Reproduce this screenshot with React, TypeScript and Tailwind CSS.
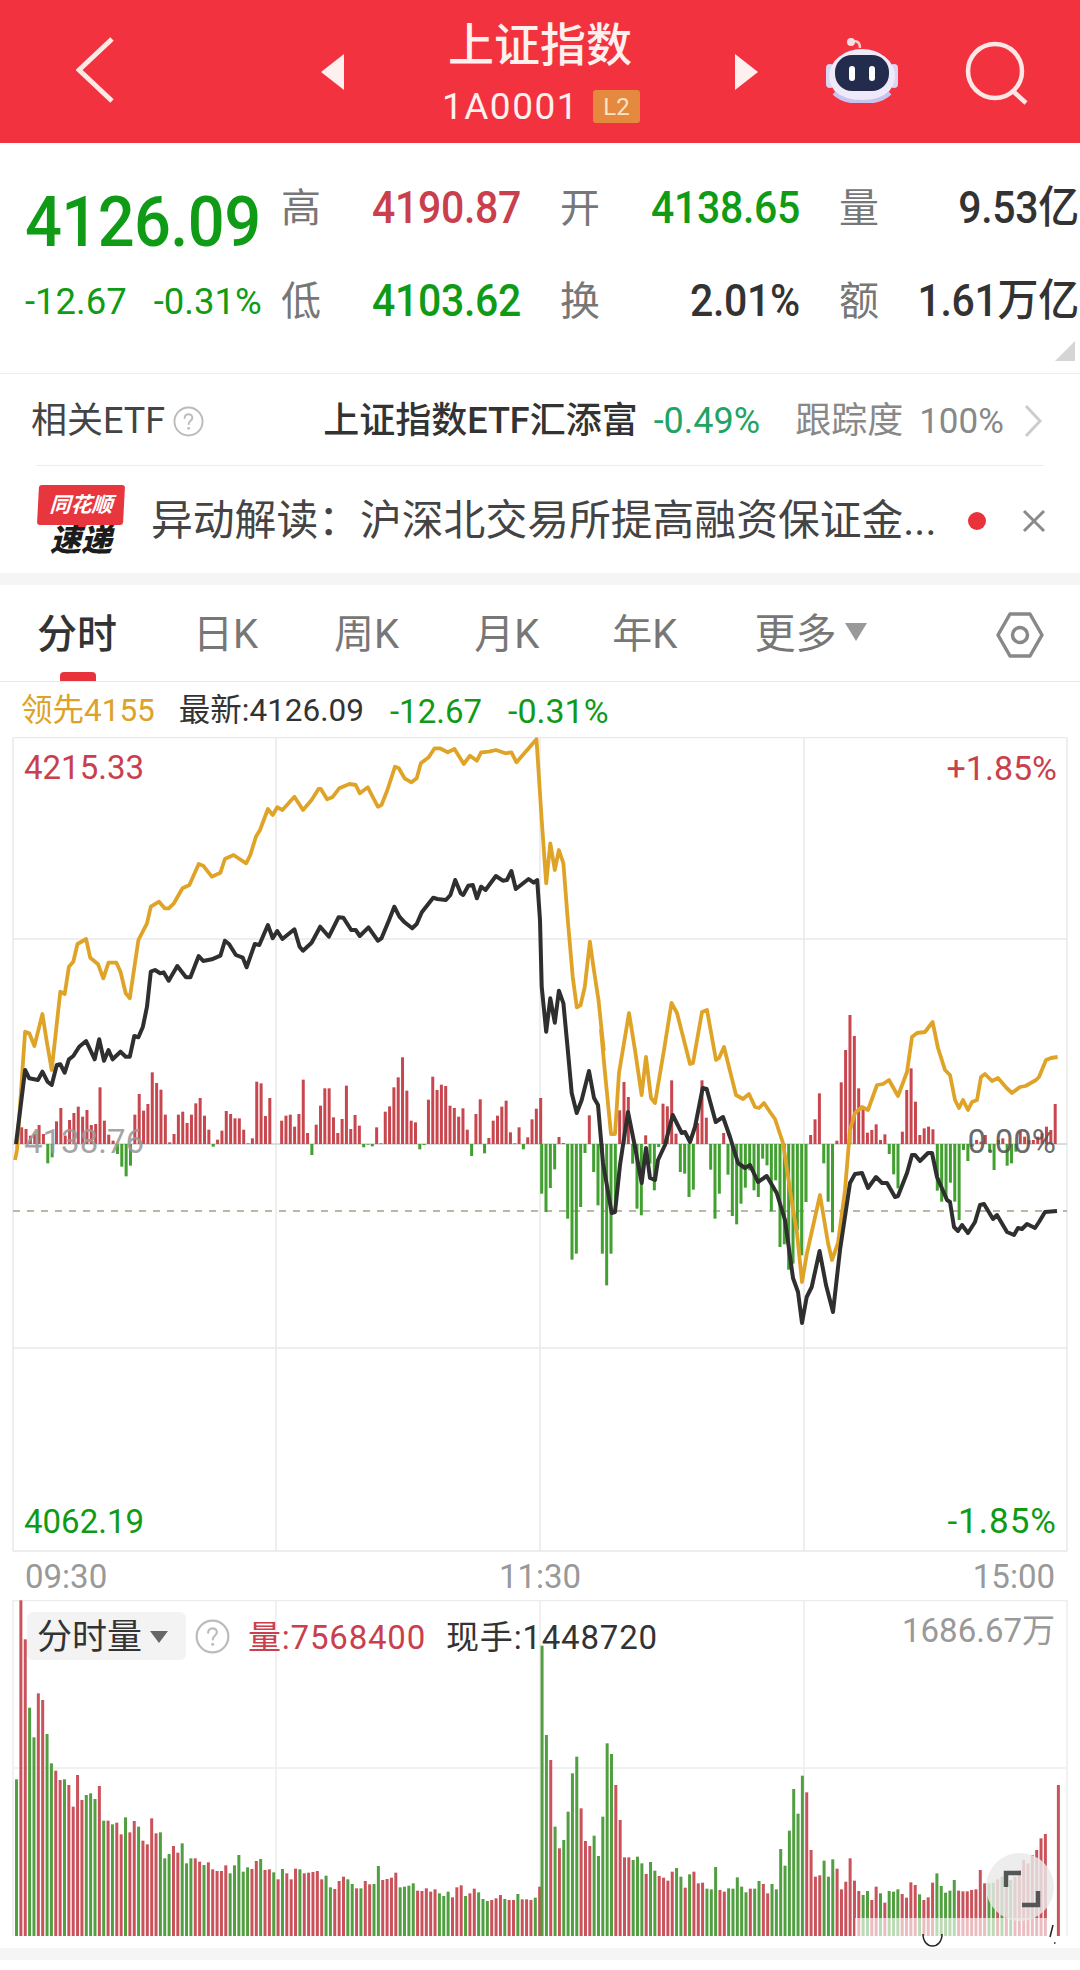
import React from "react";

type P = [number, number];
const z3 = (a: number[]) => {
  const o: P[] = [];
  for (let i = 0; i < a.length; i += 2) o.push([a[i] / 2.904, 720 + a[i + 1] / 3]);
  return o;
};
const z4 = (a: number[]) => {
  const o: P[] = [];
  for (let i = 0; i < a.length; i += 2) o.push([540 + a[i] / 2.904, 720 + a[i + 1] / 3]);
  return o;
};
const raw = (a: number[]) => {
  const o: P[] = [];
  for (let i = 0; i < a.length; i += 2) o.push([a[i], a[i + 1]]);
  return o;
};
const toPts = (p: P[]) => p.map(([x, y]) => `${x.toFixed(1)},${y.toFixed(1)}`).join(" ");

const gold: P[] = [
  ...raw([15, 1160, 17, 1150]),
  ...z3([73, 935, 85, 940, 100, 978, 123, 882, 135, 960, 150, 1050, 175, 815, 188, 822, 200, 740, 213, 725, 225, 672, 250, 657, 262, 713, 285, 733, 300, 775, 315, 728, 338, 728, 350, 755, 365, 820, 377, 835, 402, 660, 427, 610, 438, 560, 462, 545, 478, 565, 490, 565, 505, 550, 530, 505, 550, 495, 577, 432, 590, 437, 615, 470, 640, 458, 653, 417, 678, 405, 715, 430, 727, 405, 743, 350, 755, 330, 778, 267, 792, 285, 805, 262, 820, 270, 855, 230, 880, 270, 905, 240, 925, 207, 932, 207, 950, 238, 965, 232, 985, 205, 1015, 192, 1033, 195, 1045, 220, 1068, 202, 1097, 260, 1108, 255, 1125, 210, 1147, 140, 1158, 145, 1175, 175, 1195, 187, 1210, 175, 1222, 130, 1245, 112, 1262, 85, 1277, 85, 1300, 97, 1320, 87, 1347, 132, 1365, 107, 1385, 122, 1397, 97, 1420, 95, 1440, 90, 1468, 100, 1485, 97, 1500, 127, 1558, 58]),
  ...z4([5, 300, 18, 490, 30, 370, 43, 450, 55, 390, 68, 430, 80, 590, 95, 770, 107, 862, 118, 855, 130, 800, 145, 665, 155, 740, 170, 840, 185, 990]),
  ...raw([601, 1030, 605, 1073, 611, 1134, 615, 1134, 619, 1073, 629, 1013, 635, 1050, 641.6, 1095, 646, 1057, 651, 1098, 655, 1103, 664, 1050, 671.5, 1003, 677, 1013, 690, 1064, 693, 1063, 702, 1012, 707, 1010, 716, 1060, 719, 1058, 724, 1047, 736, 1095, 743, 1099, 749, 1094, 755, 1107, 759, 1108, 764, 1103, 770, 1112, 775, 1119, 783, 1143, 792, 1203, 797, 1233, 802, 1282, 807, 1253, 820, 1195, 828, 1243, 832, 1260, 838, 1243, 845, 1190, 850, 1130, 855, 1113, 862, 1107, 868, 1110, 877, 1085, 883, 1084, 889, 1080, 898, 1096, 907, 1072, 912, 1037, 917, 1033, 925, 1032, 932.6, 1022, 938, 1048, 945, 1070, 950, 1075, 955, 1100, 959, 1108, 963, 1100, 968, 1110, 972, 1102, 977, 1100, 981, 1077, 985, 1074, 992, 1081, 998, 1078, 1006.6, 1088, 1012, 1093, 1020, 1087, 1025.5, 1086, 1036, 1080, 1039, 1077, 1046, 1060, 1051, 1058, 1057.6, 1057]),
];

const black: P[] = [
  ...raw([16, 1144]),
  ...z3([73, 1050, 85, 1075, 110, 1080, 123, 1055, 138, 1085, 150, 1095, 165, 1035, 175, 1033, 188, 1058, 200, 1018, 213, 1008, 230, 980, 250, 963, 275, 1018, 288, 958, 302, 1022, 315, 990, 327, 1018, 350, 995, 365, 1010, 377, 1010, 390, 948, 402, 952, 415, 920, 427, 860, 438, 755, 450, 750, 465, 760, 475, 757, 490, 782, 515, 738, 540, 772, 553, 772, 577, 708, 590, 723, 615, 718, 640, 707, 653, 662, 665, 672, 685, 705, 705, 713, 716, 742, 740, 672, 753, 675, 778, 615, 792, 655, 805, 633, 820, 657, 855, 628, 870, 680, 880, 692, 905, 668, 930, 620, 955, 650, 983, 592, 997, 593, 1020, 630, 1033, 630, 1045, 648, 1070, 622, 1097, 662, 1108, 655, 1130, 600, 1145, 560, 1160, 590, 1175, 607, 1197, 625, 1210, 612, 1225, 577, 1258, 533, 1270, 537, 1295, 540, 1308, 525, 1322, 480, 1338, 520, 1345, 525, 1360, 497, 1373, 495, 1385, 535, 1397, 500, 1410, 510, 1440, 468, 1460, 482, 1472, 480, 1485, 453, 1498, 507, 1535, 477, 1550, 488, 1560, 480]),
  ...z4([0, 600, 5, 800, 18, 935, 30, 835, 43, 908, 55, 812, 68, 850, 80, 980]),
  ...raw([571.7, 1093, 576.7, 1113, 581.7, 1100, 589, 1071, 594, 1098, 598, 1105, 603, 1163, 611.7, 1213, 615, 1212, 620, 1165, 628, 1112, 635, 1147, 641.7, 1183, 646, 1148, 650, 1178, 655, 1180, 658, 1160, 665, 1145, 672.7, 1115, 681.7, 1133, 685, 1132, 690, 1142, 695, 1127, 702.7, 1088, 706.7, 1089, 715.7, 1122, 723, 1117, 730, 1137, 738, 1163, 745, 1168, 750, 1165, 758, 1182, 766.7, 1176, 776.7, 1193, 785, 1220, 793, 1278, 798, 1292, 802, 1323, 806.7, 1297, 811.7, 1287, 819.6, 1251, 826, 1285, 833, 1312, 840, 1250, 850, 1183, 855, 1174, 862, 1173, 868, 1188, 876, 1177, 882, 1183, 887, 1183, 895, 1197, 898, 1196, 907, 1173, 912, 1155, 915, 1155, 920, 1161, 928, 1153, 932, 1153, 937, 1177, 947, 1200, 950, 1202, 954, 1227, 958, 1231, 962, 1225, 968, 1233, 975, 1222, 980, 1205, 984, 1204, 993, 1219, 997, 1215, 1007, 1232, 1014, 1235, 1018, 1228, 1022, 1229, 1027, 1224, 1035, 1228, 1039, 1222, 1045, 1212, 1057, 1211]),
];

const z10 = [260, 265, 285, 280, 253, 280, 368, 350, 242, 202, 285, 238, 217, 198, 228, 208, 253, 250, 140, 240, 282, 300, 340, 378, 407, 375, 222, 160, 210, 190, 95, 127, 147, 222, 305, 280, 222, 213, 247, 222, 188, 172, 225, 267, 318, 297, 270, 211, 220, 233, 233, 267, 308, 293, 123, 128, 226, 172];
const z11 = [240, 225, 222, 258, 220, 117, 277, 343, 252, 195, 143, 143, 230, 277, 235, 135, 265, 223, 255, 320, 312, 317, 260, 308, 213, 197, 140, 110, 50, 150, 240, 245, 326, 313, 177, 108, 148, 132, 136, 195, 202, 228, 203, 267, 346, 220, 176, 338, 292, 240, 225, 198, 180, 275, 308, 260, 326, 290, 236, 204, 172];
const z8 = [490, 545, 473, 417, 320, 338, 565, 688, 670, 530, 368, 255, 425, 525, 670, 765, 670, 520, 240, 155, 200, 400, 535, 555, 315, 400, 480, 350, 220, 228, 150, 310, 425, 430, 500, 478, 278, 150, 262, 418, 565, 490, 308, 433, 557, 582, 520, 472, 420, 480, 500, 385, 405, 543, 450, 650, 642, 718, 700, 600, 675, 515];
const z9 = [315, 268, 190, 400, 515, 607, 332, 157, 60, -45, 18, 175, 238, 308, 300, 283, 330, 313, 372, 433, 475, 305, 180, 115, 215, 315, 295, 290, 298, 482, 515, 503, 458, 515, 570, 360, 393, 350, 330, 335, 315, 365, 420, 330, 325, 407, 400, 365, 305, 320, 330, 330, 320, 310, 290, 300, 222];

type Bar = { x: number; y: number; h: number; c: string };
const mainBars: Bar[] = [];
const addMain = (vals: number[], f: (i: number) => number, zero: number) => {
  vals.forEach((v, i) => {
    const d = (v - zero) / 3;
    mainBars.push(d < 0 ? { x: f(i), y: 1144 + d, h: -d, c: "#c8474f" } : { x: f(i), y: 1144, h: d, c: "#41a030" });
  });
};
addMain(z10, (i) => (65 + 13.06 * i) / 3, 310);
addMain(z11, (i) => 270 + (35 + 12.95 * i) / 3, 310);
addMain(z8, (i) => 530 + (35 + 13 * i) / 3, 341);
addMain(z9, (i) => 800 + (32 + 13.1 * i) / 3, 342);

const v5 = [-538, 1, 118, -323, -412, 280, 300, -402, -490, 512, 540, -538, 555, 620, 525, 600, -585, -580, -597, 558, -662, 662, -673, 668, 703, -652, 697, 663, -680, 722, 733, 655, 700, -697, -775, -762, 738, 758, -730, -790, -775, 775, 785, -795, 787, 808, 813, 813, 796, -820, -796, -765, -815, -802, 807, 783, -777, 810, 808, -817, 838, -807, 820, 838, 806, -808, 820, 818, 816, 813, 838, -827, -862, 867, 843, 830, -838, -852, 865, -865, 843, 853, -852, -798, 840, 837, 833, 818, -862, -860, -857, -850, 872, 873, 865, 875, 868, -880, -888, -875, 892, 862, 856, -888, 880, 866, -877, -897, -903, 900, 895, 885, -897, 900, 900, -882, 898, 898, 900, -893, 860];
const v6 = [-137, -405, 480, -680, 745, -720, -635, -520, -470, 625, 723, 738, -707, -768, -650, -430, -462, 555, 660, 772, 772, -780, -770, -790, 822, -786, -812, 828, 833, 842, 815, -804, -830, 863, -823, 815, 850, 848, -866, -868, -801, 870, 875, -865, -866, -832, -860, -877, 866, -866, -843, 852, 880, -852, -868, -747, -797, -692, -567, -641, -527, 577, 750, 830, 826, -782, -830, -778, 806, 868, 845, 775, 842, 873, -885, -873, 900, 860, -880, 908, -873, -875, -868, 882, 893, 847, 855, -883, 900, 892, 848, -820, -858, -878, -872, -840, 872, 874, 874, 870, 868, 810, 850, -850, -848, 838, -830, 835, -840, 830, 810, 780, 790, 765, 750, 715, 702, 0, 0, 555];

const volBars: Bar[] = [];
const addVol = (vals: number[], f: (i: number) => number) => {
  vals.forEach((v, i) => {
    if (v === 0) return;
    const top = 1600 + Math.abs(v) / 3;
    volBars.push({ x: f(i), y: top, h: 1936 - top, c: v > 0 ? "#ca525b" : "#519f40" });
  });
};
addVol(v5, (i) => (48 + 12.66 * i) / 2.904);
addVol(v6, (i) => 540 + (6 + 12.6 * i) / 2.904);

const num = "font-[Roboto,'Noto_Sans_CJK_SC',sans-serif]";

function StatCell({ label, value, color }: { label: string; value: React.ReactNode; color: string }) {
  return (
    <div className="flex items-center justify-between">
      <span className="text-[40px] leading-none text-[#777]">{label}</span>
      <span className={`inline-block scale-y-[1.07] whitespace-nowrap text-[41px] font-medium leading-none tracking-[-0.300px] ${color}`}>{value}</span>
    </div>
  );
}

function Help({ size }: { size: number }) {
  return (
    <svg width={size} height={size} viewBox="0 0 32 32" fill="none" className="shrink-0">
      <circle cx="16" cy="16" r="14.5" stroke="#bbb" strokeWidth="2" />
      <path d="M12 12.5c0-2.4 1.8-4 4-4s4 1.500 4 3.600c0 3-3.800 3.400-3.800 6.600" stroke="#bbb" strokeWidth="2" strokeLinecap="round" />
      <circle cx="16.200" cy="23" r="1.400" fill="#bbb" />
    </svg>
  );
}

export default function App() {
  return (
    <div className={`relative h-[1970px] w-[1080px] overflow-hidden bg-white ${num}`}>
      {/* Header */}
      <header className="flex h-[143px] items-center bg-[#f2323e] text-[#fdf0ee]">
        <svg width="38" height="66" viewBox="0 0 38 66" fill="none" className="ml-[76px] mt-[-4px]">
          <path d="M36 2 L3 33 L36 64" stroke="#fde9e6" strokeWidth="5" />
        </svg>
        <svg width="23" height="36" viewBox="0 0 23 36" className="ml-[207px]"><path d="M23 0V36L0 18Z" fill="#fdf0ee" /></svg>
        <div className="ml-[46px] flex w-[300px] flex-col items-center">
          <div className="text-[46px] font-medium leading-[56px]">上证指数</div>
          <div className="mt-[14px] flex items-center gap-[14px] pl-[2px]">
            <span className="text-[37px] leading-[40px] tracking-[1.500px]">1A0001</span>
            <span className="flex h-[33px] w-[47px] items-center justify-center rounded-[3px] bg-[#e5893f] text-[24px] leading-none text-[#fbe3c8]">L2</span>
          </div>
        </div>
        <svg width="23" height="36" viewBox="0 0 23 36" className="ml-[45px]"><path d="M0 0V36L23 18Z" fill="#fdf0ee" /></svg>
        <svg width="72" height="68" viewBox="0 0 72 68" fill="none" className="ml-[68px] mt-[-6px]">
          <path d="M26 8c3-3 8-2 8 5" stroke="#f5c9cf" strokeWidth="2.500" />
          <circle cx="25" cy="7" r="4" fill="#f3dfe4" />
          <rect x="0" y="29" width="8" height="24" rx="4" fill="#d9d6f5" />
          <rect x="64" y="29" width="8" height="24" rx="4" fill="#d9d6f5" />
          <ellipse cx="36" cy="41" rx="33" ry="27" fill="#eeeaf9" />
          <path d="M8 58c12 12 44 12 56 0" stroke="#c9c3f0" strokeWidth="4" fill="none" />
          <rect x="9" y="20" width="54" height="36" rx="17" fill="#232c4c" />
          <rect x="23" y="31" width="6" height="15" rx="3" fill="#fff" />
          <rect x="43" y="31" width="6" height="15" rx="3" fill="#fff" />
        </svg>
        <svg width="70" height="70" viewBox="0 0 70 70" fill="none" className="ml-[60px] mt-[-2px]">
          <circle cx="37" cy="35" r="27" stroke="#fde6e6" strokeWidth="4.500" />
          <path d="M56 56 L68 67" stroke="#fde6e6" strokeWidth="4.500" />
        </svg>
      </header>

      {/* Quote stats */}
      <section className="relative h-[231px] border-b border-[#ececec]">
        <div className="grid grid-cols-[217px_240px_240px_240px] gap-x-[39px] pl-[25px] pt-[45px]">
          <div className="h-[40px] whitespace-nowrap">
            <span className="mt-[-2px] inline-block origin-top scale-y-[1.08] text-[65px] font-medium leading-[68px] tracking-[-0.600px] text-[#0f9b16]">4126.09</span>
          </div>
          <StatCell label="高" value="4190.87" color="text-[#c9404c]" />
          <StatCell label="开" value="4138.65" color="text-[#0f9b16]" />
          <StatCell label="量" value="9.53亿" color="text-[#333]" />
        </div>
        <div className="mt-[52px] grid grid-cols-[217px_240px_240px_240px] gap-x-[39px] pl-[25px]">
          <div className="flex items-center gap-[27px] whitespace-nowrap text-[36.500px] leading-[40px] text-[#0f9b16]">
            <span>-12.67</span>
            <span>-0.31%</span>
          </div>
          <StatCell label="低" value="4103.62" color="text-[#0f9b16]" />
          <StatCell label="换" value="2.01%" color="text-[#333]" />
          <StatCell label="额" value="1.61万亿" color="text-[#333]" />
        </div>
        <div className="absolute bottom-[12px] right-[5px] h-0 w-0 border-b-[20px] border-l-[20px] border-b-[#d5d5d5] border-l-transparent" />
      </section>

      {/* ETF */}
      <section className="mx-[36px] flex h-[92px] items-center whitespace-nowrap border-b border-[#ececec] pt-[3px] leading-none">
        <span className="ml-[-5px] text-[36px] text-[#444]">相关ETF</span>
        <span className="ml-[8px]"><Help size={31} /></span>
        <span className="ml-[119px] text-[36px] font-medium text-[#333]">上证指数ETF汇添富</span>
        <span className="ml-[16px] text-[36px] text-[#1fa463]">-0.49%</span>
        <span className="ml-[35px] text-[36px] text-[#888]">跟踪度</span>
        <span className="ml-[16px] text-[35px] text-[#888]">100%</span>
        <svg width="18" height="32" viewBox="0 0 18 32" fill="none" className="ml-[20px] shrink-0"><path d="M2 1 L16 16 L2 31" stroke="#ccc" strokeWidth="3" /></svg>
      </section>

      {/* News */}
      <section className="flex h-[107px] items-center pt-[3px]">
        <div className="relative ml-[37px] flex w-[88px] shrink-0 flex-col items-center">
          <div className="flex h-[40px] w-[86px] -skew-x-3 items-center justify-center rounded-[3px] bg-[#e8363f] text-[21px] font-bold italic leading-none text-white">同花顺</div>
          <div className="h-0 w-0 border-l-[6px] border-r-[6px] border-t-[7px] border-l-transparent border-r-transparent border-t-[#e8363f]" />
          <div className="mt-[-7px] text-[31px] font-black italic leading-[32px] text-[#1c1c1c]">速递</div>
        </div>
        <span className="ml-[26px] w-[788px] whitespace-nowrap text-[41.800px] leading-none text-[#444]">异动解读：沪深北交易所提高融资保证金...</span>
        <span className="ml-[29px] h-[18px] w-[18px] shrink-0 rounded-full bg-[#e8333c]" />
        <svg width="24" height="24" viewBox="0 0 24 24" fill="none" className="ml-[36px] shrink-0"><path d="M2 2 L22 22 M22 2 L2 22" stroke="#8a8a8a" strokeWidth="3" /></svg>
      </section>
      <div className="h-[12px] bg-[#f5f5f5]" />

      {/* Tabs */}
      <nav className="relative flex h-[97px] items-center border-b border-[#e8e8e8] pt-[3px] text-[40px] leading-none text-[#777]">
        <span className="ml-[37px] font-medium text-[#333]">分时</span>
        <span className="ml-[76px]">日K</span>
        <span className="ml-[76px]">周K</span>
        <span className="ml-[75px]">月K</span>
        <span className="ml-[73px]">年K</span>
        <span className="ml-[77px] text-[41px]">更多</span>
        <svg width="22" height="18" viewBox="0 0 22 18" className="ml-[9px] mt-[-6px] shrink-0"><path d="M0 0H22L11 18Z" fill="#999" /></svg>
        <svg width="48" height="48" viewBox="0 0 48 48" fill="none" className="ml-[129px] shrink-0">
          <path d="M14 3H34L46 24L34 45H14L2 24Z" stroke="#888" strokeWidth="3.500" strokeLinejoin="round" />
          <circle cx="24" cy="24" r="7.500" stroke="#888" strokeWidth="3.500" />
        </svg>
        <span className="absolute bottom-0 left-[60px] h-[9px] w-[36px] rounded-t-[4px] bg-[#e8333c]" />
      </nav>

      {/* Legend */}
      <div className="flex h-[55px] items-center whitespace-nowrap pl-[21px] pt-[3px] text-[31.500px] leading-none">
        <span className="text-[#dca22a]">领先4155</span>
        <span className="ml-[24px] text-[#333]">最新:4126.09</span>
        <span className="ml-[26px] text-[33px] text-[#0f9b16]">-12.67</span>
        <span className="ml-[26px] text-[34px] text-[#0f9b16]">-0.31%</span>
      </div>

      {/* Main chart */}
      <section className="relative h-[815px]">
        <svg width="1080" height="815" viewBox="0 737 1080 815" className="block">
          <g stroke="#e9e9e9" strokeWidth="1.500">
            {[13, 276, 540, 804, 1067].map((x) => <line key={x} x1={x} x2={x} y1="737" y2="1551" />)}
            {[737.5, 939, 1348, 1551].map((y) => <line key={y} x1="13" x2="1067" y1={y} y2={y} />)}
          </g>
          <line x1="13" x2="1067" y1="1144" y2="1144" stroke="#cfcfcf" strokeWidth="1.500" />
          <line x1="13" x2="1067" y1="1211" y2="1211" stroke="#a89f85" strokeWidth="1.500" strokeDasharray="7 7" />
          {mainBars.map((b, i) => <rect key={i} x={b.x - 1.5} y={b.y} width="3" height={b.h} fill={b.c} />)}
          <polyline points={toPts(gold)} fill="none" stroke="#dfa427" strokeWidth="3.800" strokeLinejoin="round" />
          <polyline points={toPts(black)} fill="none" stroke="#2f2f2f" strokeWidth="4" strokeLinejoin="round" />
        </svg>
        <span className="absolute left-[24px] top-[14px] text-[33px] leading-[34px] text-[#c9404c]">4215.33</span>
        <span className="absolute right-[23px] top-[14px] text-[34px] leading-[34px] text-[#c9404c]">+1.85%</span>
        <span className="absolute left-[24px] top-[388px] text-[33px] leading-[34px] text-[#999]/90">4138.76</span>
        <span className="absolute right-[24px] top-[388px] text-[33px] leading-[34px] text-[#555]/90">0.00%</span>
        <span className="absolute bottom-[13px] left-[24px] text-[33px] leading-[34px] text-[#0f9b16]">4062.19</span>
        <span className="absolute bottom-[13px] right-[23px] text-[35px] leading-[34px] tracking-[1px] text-[#0f9b16]">-1.85%</span>
      </section>

      {/* Time axis */}
      <div className="flex h-[48px] items-center justify-between px-[25px] text-[33px] leading-none text-[#999]">
        <span>09:30</span>
        <span>11:30</span>
        <span>15:00</span>
      </div>

      {/* Volume */}
      <section className="relative h-[348px]">
        <svg width="1080" height="348" viewBox="0 1600 1080 348" className="block">
          <g stroke="#ececec" strokeWidth="1.500">
            {[13, 276, 540, 804, 1067].map((x) => <line key={x} x1={x} x2={x} y1="1600" y2="1936" />)}
            {[1600.5, 1768].map((y) => <line key={y} x1="13" x2="1067" y1={y} y2={y} />)}
          </g>
          {volBars.map((b, i) => <rect key={i} x={b.x - 1.5} y={b.y} width="3" height={b.h} fill={b.c} />)}
          <rect x="855" y="1918" width="200" height="24" fill="#fff" fillOpacity="0.62" />
          <circle cx="1020" cy="1887" r="34" fill="#e9e9e9" fillOpacity="0.82" />
          <path d="M1006 1887V1873H1021" stroke="#555" strokeWidth="4.500" fill="none" />
          <path d="M1038 1891V1905H1022" stroke="#555" strokeWidth="4.500" fill="none" />
          <path d="M923 1934c0 16 19 16 19 0" stroke="#222" strokeWidth="1.500" fill="none" />
          <path d="M1053 1925L1050 1937M1054 1943h1.500" stroke="#222" strokeWidth="1.500" fill="none" />
        </svg>
        <div className="absolute left-[27px] top-[12px] flex h-[48px] w-[159px] items-center rounded-[6px] bg-[#f2f2f2]/90 pl-[10px] pt-[2px] text-[35px] leading-none text-[#333]">
          <span>分时量</span>
          <svg width="18" height="12" viewBox="0 0 18 12" className="ml-[8px]"><path d="M0 0H18L9 12Z" fill="#666" /></svg>
        </div>
        <div className="absolute left-[195px] top-[19px]"><Help size={35} /></div>
        <div className="absolute left-[248px] top-[20px] flex items-center text-[33px] leading-[36px] tracking-[0.800px]">
          <span className="text-[#c9404c]">量:7568400</span>
          <span className="ml-[20px] text-[#333]">现手:1448720</span>
        </div>
        <span className="absolute right-[25px] top-[12px] text-[33px] leading-[38px] text-[#999]">1686.67万</span>
      </section>
      <div className="h-[12px] bg-[#f5f5f5]" />
    </div>
  );
}
